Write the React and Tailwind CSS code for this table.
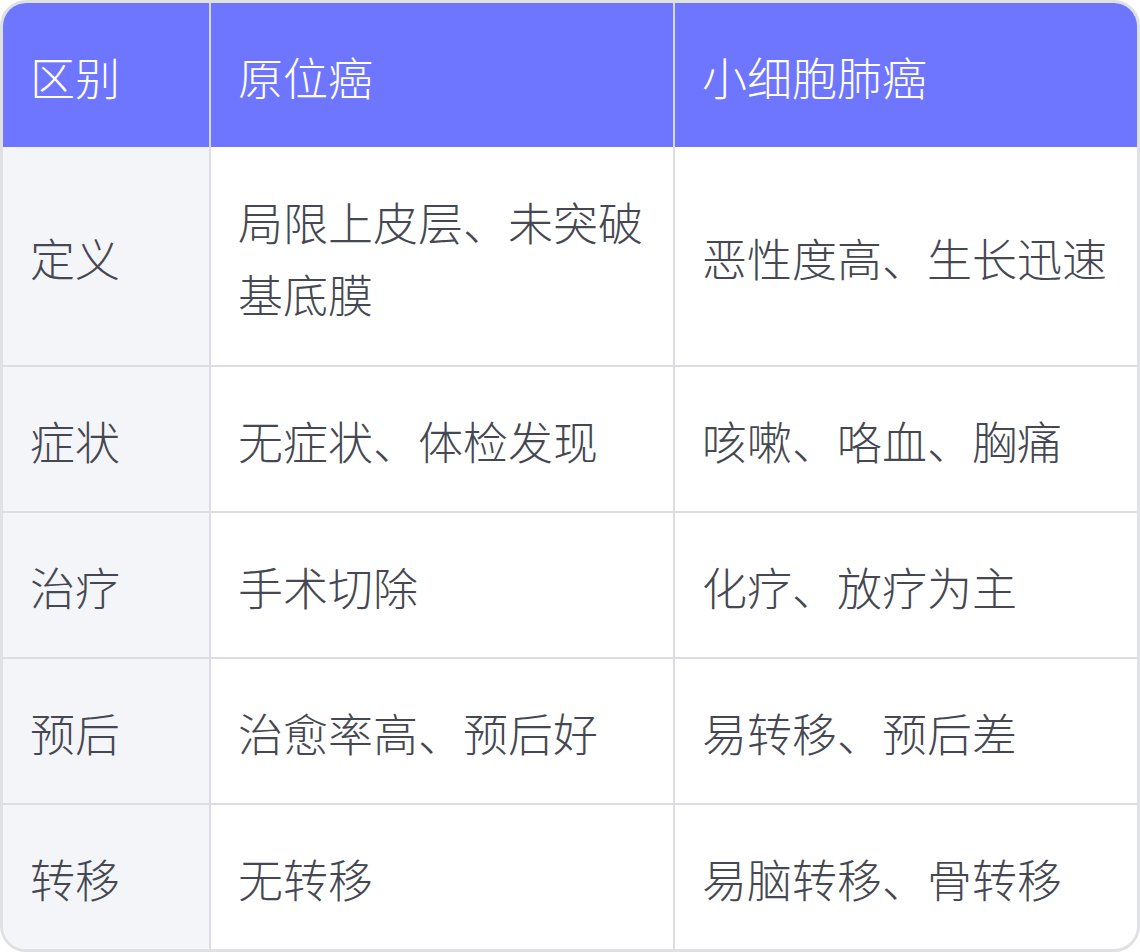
import React from 'react';

const rows = [
    ['定义', '局限上皮层、未突破基底膜', '恶性度高、生长迅速'],
    ['症状', '无症状、体检发现', '咳嗽、咯血、胸痛'],
    ['治疗', '手术切除', '化疗、放疗为主'],
    ['预后', '治愈率高、预后好', '易转移、预后差'],
    ['转移', '无转移', '易脑转移、骨转移'],
];

const App = () => {
    return (
        <div className="w-[1140px] h-[952px] bg-white" style={{ fontFamily: '"Noto Sans CJK SC", "Noto Sans", sans-serif' }}>
            <div className="rounded-[26px] border-[3px] border-[#e0e1e5] overflow-hidden">
                <table className="w-full table-fixed border-collapse text-[45px] font-light leading-[72px] text-[#454852]">
                    <colgroup>
                        <col className="w-[207px]" />
                        <col className="w-[464px]" />
                        <col />
                    </colgroup>
                    <thead className="bg-[#6e75ff] text-white">
                        <tr>
                            <th className="px-[27px] pt-[38px] pb-[34px] text-left font-light border-r-2 border-[#d4d7f0]">区别</th>
                            <th className="px-[27px] pt-[38px] pb-[34px] text-left font-light border-r-2 border-[#d4d7f0]">原位癌</th>
                            <th className="px-[27px] pt-[38px] pb-[34px] text-left font-light">小细胞肺癌</th>
                        </tr>
                    </thead>
                    <tbody>
                        {rows.map((row, i) => (
                            <tr key={i} className={i > 0 ? 'border-t-2 border-[#dcdde2]' : 'h-[219px]'}>
                                <td className="px-[27px] pt-[38px] pb-[34px] bg-[#f4f5f9] border-r-2 border-[#dcdde2] align-middle">{row[0]}</td>
                                <td className="px-[27px] pt-[38px] pb-[34px] border-r-2 border-[#dcdde2] align-middle">{row[1]}</td>
                                <td className="px-[27px] pt-[38px] pb-[34px] align-middle">{row[2]}</td>
                            </tr>
                        ))}
                    </tbody>
                </table>
            </div>
        </div>
    );
};

export default App;
